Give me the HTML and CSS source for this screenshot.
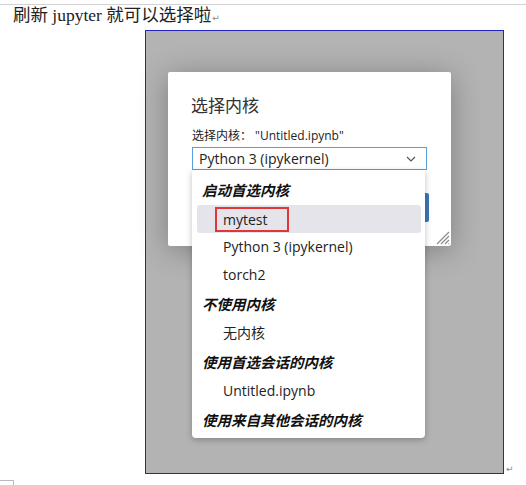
FILE: index.html
```html
<!DOCTYPE html>
<html>
<head>
  <meta charset="utf-8">
  <title>刷新 jupyter</title>
  <link rel="stylesheet" href="styles.css">
</head>
<body>
  <div class="rule"></div>
  <p class="lead">刷新 jupyter 就可以选择啦<span class="ret">↵</span></p>

  <div class="figure-line">
    <div class="shot">
      <div class="dialog">
        <h2 class="dialog-title">选择内核</h2>
        <div class="dialog-label">选择内核：&nbsp;"Untitled.ipynb"</div>
        <div class="select-wrap">
          <div class="select">
            <span>Python 3 (ipykernel)</span>
            <svg class="chevron" width="10" height="6" viewBox="0 0 10 6"><path d="M1 1 L5 5 L9 1" fill="none" stroke="#555" stroke-width="1.2"/></svg>
          </div>
          <ul class="menu">
            <li class="group">启动首选内核</li>
            <li class="item active"><span class="mark">mytest</span></li>
            <li class="item">Python 3 (ipykernel)</li>
            <li class="item">torch2</li>
            <li class="group">不使用内核</li>
            <li class="item">无内核</li>
            <li class="group">使用首选会话的内核</li>
            <li class="item">Untitled.ipynb</li>
            <li class="group">使用来自其他会话的内核</li>
          </ul>
        </div>
        <div class="buttons">
          <button class="btn">选择</button>
        </div>
        <svg class="grip" width="15" height="15" viewBox="0 0 15 15">
          <path d="M14 2 L2 14 M14 6 L6 14 M14 10 L10 14 M14 13.5 L13.5 14" stroke="#888" stroke-width="1.1"/>
        </svg>
      </div>
    </div>
    <span class="ret end">↵</span>
  </div>

  <div class="corner"></div>
</body>
</html>
```

FILE: styles.css
```css
body {
  margin: 0;
  font-family: "Liberation Serif", "Noto Sans CJK SC", serif;
  background: #fff;
  color: #111;
}

.rule {
  height: 4px;
  border-bottom: 1px solid #d2d2d2;
}

.lead {
  margin: 0;
  height: 20px;
  overflow: hidden;
  padding-left: 13px;
  font-size: 17.5px;
  line-height: 20px;
  color: #222;
}

.ret {
  font-family: "DejaVu Sans", sans-serif;
  font-size: 9px;
  line-height: 0;
  color: #888;
  margin-left: 1px;
}

.figure-line {
  display: flex;
  align-items: flex-end;
  margin-top: 5px;
  padding-left: 145px;
}

.ret.end {
  margin-left: 2px;
  line-height: 10px;
}

.shot {
  box-sizing: border-box;
  width: 359px;
  height: 444px;
  border: 1px solid #2424c4;
  background: #b3b3b3;
  padding: 41px 0 0 22px;
}

.dialog {
  position: relative;
  box-sizing: border-box;
  width: 283px;
  height: 174px;
  background: #fff;
  border-radius: 2px;
  box-shadow: 0 4px 30px rgba(0, 0, 0, 0.3);
  padding: 22px 24px 0 24px;
  font-family: "Open Sans", "Noto Sans CJK SC", sans-serif;
}

.dialog-title {
  margin: 0 0 0 -1px;
  font-family: "Noto Sans CJK SC", sans-serif;
  font-size: 17px;
  font-weight: 400;
  line-height: 22px;
  color: #333;
}

.dialog-label {
  margin-top: 12px;
  font-size: 12px;
  line-height: 16px;
  color: #222;
}

.select-wrap {
  position: relative;
  margin-top: 3px;
  z-index: 2;
}

.select {
  box-sizing: border-box;
  height: 23px;
  border: 1px solid #5b9fd8;
  display: flex;
  align-items: center;
  justify-content: space-between;
  padding: 0 10px 0 6px;
  font-size: 14px;
  color: #222;
}

.menu {
  position: absolute;
  top: 100%;
  left: 0;
  box-sizing: border-box;
  width: 233px;
  margin: 0;
  padding: 5px 0 3px 0;
  list-style: none;
  background: #fff;
  border-radius: 0 0 4px 4px;
  box-shadow: 0 2px 6px rgba(0, 0, 0, 0.25);
}

.menu .group {
  height: 30px;
  line-height: 30px;
  padding-left: 10px;
  font-family: "Noto Sans CJK SC", sans-serif;
  font-size: 14.5px;
  font-weight: 700;
  font-style: italic;
  color: #111;
}

.menu .item {
  height: 28px;
  line-height: 28px;
  padding-left: 31px;
  font-size: 14px;
  color: #222;
}

.menu .item.active {
  margin: 0 4px 0 5px;
  padding-left: 26px;
  background: #e4e4ea;
  border-radius: 3px;
  display: flex;
  align-items: center;
}

.mark {
  box-sizing: border-box;
  height: 25px;
  line-height: 21px;
  margin-left: -8px;
  padding: 0 19px 0 6px;
  border: 2px solid #e0363a;
}

.buttons {
  display: flex;
  justify-content: flex-end;
  margin: -2px -2px 0 0;
  padding-top: 25px;
}

.btn {
  height: 29px;
  width: 80px;
  border: none;
  border-radius: 2px;
  background: #3b78bb;
  color: #fff;
  font-size: 13px;
}

.grip {
  position: absolute;
  right: 1px;
  bottom: 1px;
}

.corner {
  width: 13px;
  height: 6px;
  margin-top: 6px;
  border-top: 1px solid #bbb;
  border-right: 1px solid #bbb;
}
```
